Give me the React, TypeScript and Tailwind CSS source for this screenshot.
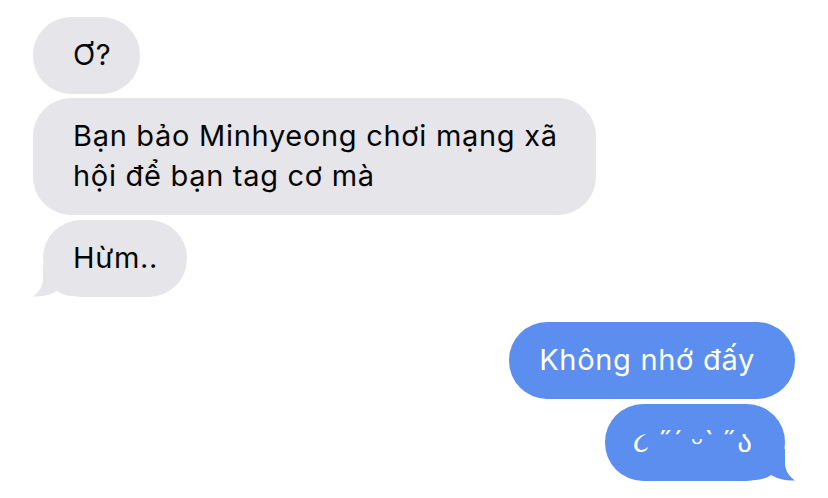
import React from 'react';

type Msg = { id: number; from: 'them' | 'me'; text: string; tail?: boolean; wide?: boolean; tight?: boolean };

const messages: Msg[] = [
  { id: 1, from: 'them', text: 'Ơ?' },
  { id: 2, from: 'them', text: 'Bạn bảo Minhyeong chơi mạng xã hội để bạn tag cơ mà', wide: true },
  { id: 3, from: 'them', text: 'Hừm..', tail: true },
  { id: 4, from: 'me', text: 'Không nhớ đấy' },
  { id: 5, from: 'me', text: '૮ ˶´ ᵕˋ ˶ა', tail: true, tight: true },
];

// bubble tail, drawn for the left side; flipped for the right
const Tail = ({ color, flip }: { color: string; flip?: boolean }) => (
  <svg
    width="40"
    height="32"
    viewBox="0 0 40 32"
    className={`absolute bottom-0 ${flip ? 'right-[-10px] -scale-x-100' : 'left-[-10px]'}`}
  >
    <path
      d="M10 0 L10 14 C10 22 5 28 0 31.5 C8 32 17 30 24 26 C28 29 34 31 40 31 L40 0 Z"
      fill={color}
    />
  </svg>
);

const Bubble = ({ msg }: { msg: Msg }) => {
  const them = msg.from === 'them';
  let pad = '';
  if (them) pad = msg.tail ? 'ml-[10px] pl-[30px] pr-[29px]' : 'pl-[40px] pr-[29px]';
  else pad = msg.tail ? 'mr-[10px] pr-[33px] pl-[28px]' : 'pr-[40px] pl-[30px]';

  return (
    <div className={`flex ${them ? 'justify-start' : 'justify-end'}`}>
      <div
        className={`relative rounded-[38px] pt-[18px] pb-[19px] text-[29px] leading-[40px] ${
          msg.tight ? 'tracking-normal' : 'tracking-[0.7px]'
        } ${pad} ${them ? 'bg-[#e5e5ea] text-[#050505]' : 'bg-[#5b8eef] text-white'} ${
          msg.wide ? 'w-[563px]' : ''
        }`}
      >
        {msg.tail && <Tail color={them ? '#e5e5ea' : '#5b8eef'} flip={!them} />}
        <span className="relative">{msg.text}</span>
      </div>
    </div>
  );
};

export default function App() {
  return (
    <div
      className="w-[828px] h-[498px] bg-white pt-[17px] pl-[33px] pr-[33px] overflow-hidden"
      style={{ fontFamily: 'Inter, "Noto Sans", "DejaVu Sans", sans-serif' }}
    >
      <div className="flex flex-col gap-[4px]">
        <Bubble msg={messages[0]} />
        <Bubble msg={messages[1]} />
        <div className="mt-[1px]">
          <Bubble msg={messages[2]} />
        </div>
      </div>
      <div className="mt-[25px] flex flex-col gap-[5px]">
        <Bubble msg={messages[3]} />
        <Bubble msg={messages[4]} />
      </div>
    </div>
  );
}
